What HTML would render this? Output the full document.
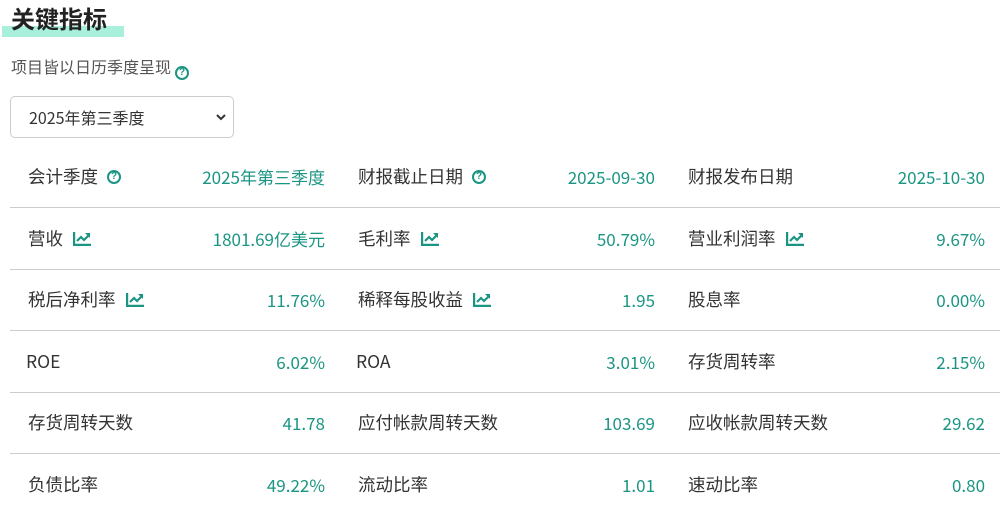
<!DOCTYPE html>
<html><head><meta charset="utf-8"><style>
*{margin:0;padding:0;box-sizing:border-box}
body{width:1000px;height:502px;overflow:hidden;background:#fff;font-family:"Noto Sans CJK SC","Liberation Sans",sans-serif;color:#333;position:relative}
.title{position:absolute;left:2px;top:2px;height:36px;width:122px}
.title .bar{position:absolute;left:0;top:24px;width:122px;height:11px;background:#a8f0dc}
.title span{position:relative;left:9px;font-size:24px;font-weight:bold;color:#222;line-height:32px}
.sub{position:absolute;left:11px;top:54px;font-size:16px;color:#555;line-height:24px}
.sel{position:absolute;left:10px;top:96px;width:224px;height:42px;border:1px solid #ccc;border-radius:5px;font-size:16px;line-height:40px;padding-left:18px;color:#333}
.sel svg{position:absolute;right:7px;top:17px}
.row{position:absolute;left:10px;width:990px;display:flex;border-top:1px solid #ccc}
.cell{width:330px;display:flex;justify-content:space-between;align-items:center;padding:0 15px 0 18px;font-size:17.5px;line-height:24px}
.cell>span{display:flex;align-items:center}
.v{color:#1b9583;font-size:17px}
.q{display:inline-block;width:14px;height:14px;border:2px solid #1b9583;border-radius:50%;font-size:10px;font-weight:bold;color:#1b9583;text-align:center;line-height:10px;margin-left:9px;font-family:"Liberation Sans",sans-serif}
.sub .q{vertical-align:-2px}
.ic{margin-left:10px}
</style></head><body>
<div class="title"><div class="bar"></div><span>关键指标</span></div>
<div class="sub">项目皆以日历季度呈现<span class="q" style="margin-left:4px">?</span></div>
<div class="sel">2025年第三季度<svg width="10" height="7" viewBox="0 0 10 7"><path d="M1 1l4 4 4-4" stroke="#333" stroke-width="2" fill="none"/></svg></div>
<div class="row" style="top:147px;height:60px;border-top:none">
<div class="cell"><span>会计季度<span class="q">?</span></span><span class="v">2025年第三季度</span></div>
<div class="cell"><span>财报截止日期<span class="q">?</span></span><span class="v">2025-09-30</span></div>
<div class="cell"><span>财报发布日期</span><span class="v">2025-10-30</span></div>
</div>
<div class="row" style="top:207px;height:62px">
<div class="cell"><span>营收<svg class="ic" width="18" height="14" viewBox="0 0 18 14"><path d="M1 0v13h17" stroke="#1b9583" stroke-width="2.4" fill="none"/><path d="M4 9l4-4 3 3 5-5" stroke="#1b9583" stroke-width="2.2" fill="none"/><path d="M12 1h5v5z" fill="#1b9583"/></svg></span><span class="v">1801.69亿美元</span></div>
<div class="cell"><span>毛利率<svg class="ic" width="18" height="14" viewBox="0 0 18 14"><path d="M1 0v13h17" stroke="#1b9583" stroke-width="2.4" fill="none"/><path d="M4 9l4-4 3 3 5-5" stroke="#1b9583" stroke-width="2.2" fill="none"/><path d="M12 1h5v5z" fill="#1b9583"/></svg></span><span class="v">50.79%</span></div>
<div class="cell"><span>营业利润率<svg class="ic" width="18" height="14" viewBox="0 0 18 14"><path d="M1 0v13h17" stroke="#1b9583" stroke-width="2.4" fill="none"/><path d="M4 9l4-4 3 3 5-5" stroke="#1b9583" stroke-width="2.2" fill="none"/><path d="M12 1h5v5z" fill="#1b9583"/></svg></span><span class="v">9.67%</span></div>
</div>
<div class="row" style="top:269px;height:61px">
<div class="cell"><span>税后净利率<svg class="ic" width="18" height="14" viewBox="0 0 18 14"><path d="M1 0v13h17" stroke="#1b9583" stroke-width="2.4" fill="none"/><path d="M4 9l4-4 3 3 5-5" stroke="#1b9583" stroke-width="2.2" fill="none"/><path d="M12 1h5v5z" fill="#1b9583"/></svg></span><span class="v">11.76%</span></div>
<div class="cell"><span>稀释每股收益<svg class="ic" width="18" height="14" viewBox="0 0 18 14"><path d="M1 0v13h17" stroke="#1b9583" stroke-width="2.4" fill="none"/><path d="M4 9l4-4 3 3 5-5" stroke="#1b9583" stroke-width="2.2" fill="none"/><path d="M12 1h5v5z" fill="#1b9583"/></svg></span><span class="v">1.95</span></div>
<div class="cell"><span>股息率</span><span class="v">0.00%</span></div>
</div>
<div class="row" style="top:330px;height:62px">
<div class="cell"><span style="margin-left:-2px">ROE</span><span class="v">6.02%</span></div>
<div class="cell"><span style="margin-left:-2px">ROA</span><span class="v">3.01%</span></div>
<div class="cell"><span>存货周转率</span><span class="v">2.15%</span></div>
</div>
<div class="row" style="top:392px;height:61px">
<div class="cell"><span>存货周转天数</span><span class="v">41.78</span></div>
<div class="cell"><span>应付帐款周转天数</span><span class="v">103.69</span></div>
<div class="cell"><span>应收帐款周转天数</span><span class="v">29.62</span></div>
</div>
<div class="row" style="top:453px;height:62px">
<div class="cell"><span>负债比率</span><span class="v">49.22%</span></div>
<div class="cell"><span>流动比率</span><span class="v">1.01</span></div>
<div class="cell"><span>速动比率</span><span class="v">0.80</span></div>
</div>
</body></html>
